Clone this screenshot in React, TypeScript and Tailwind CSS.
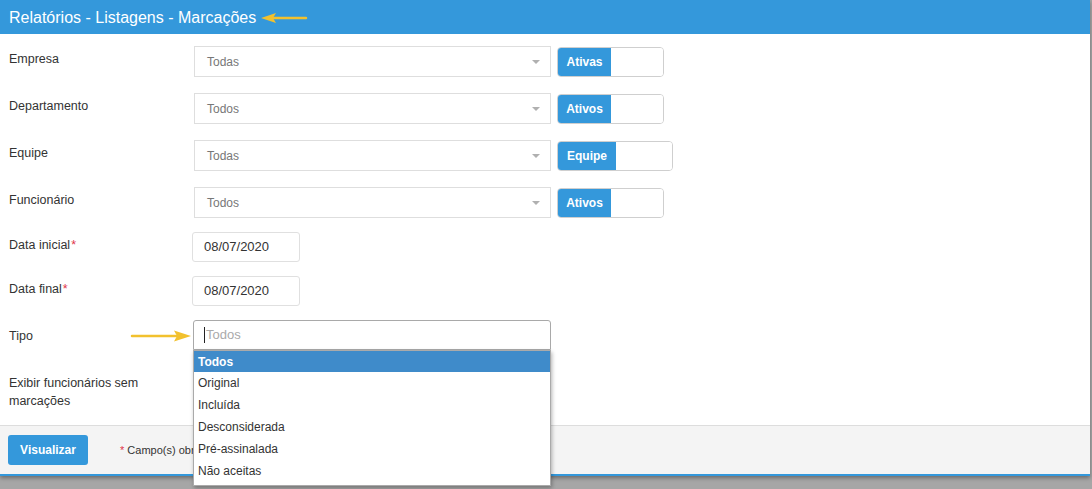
import React from 'react'

const selectRows = [
  { label: 'Empresa', value: 'Todas', toggle: 'Ativas', on: 'w-[53px]', off: 'w-[52px]' },
  { label: 'Departamento', value: 'Todos', toggle: 'Ativos', on: 'w-[53px]', off: 'w-[52px]' },
  { label: 'Equipe', value: 'Todas', toggle: 'Equipe', on: 'w-[58px]', off: 'w-[56px]' },
  { label: 'Funcionário', value: 'Todos', toggle: 'Ativos', on: 'w-[53px]', off: 'w-[52px]' },
]

const tipoOptions = ['Todos', 'Original', 'Incluída', 'Desconsiderada', 'Pré-assinalada', 'Não aceitas']

const ArrowLeft = () => (
  <svg width="48" height="12" viewBox="0 0 48 12" className="ml-[4px]">
    <path d="M14 6 H46" stroke="#f2c12e" strokeWidth="2.5" strokeLinecap="round" />
    <path d="M1 6 L16 1 L13 6 L16 11 Z" fill="#f2c12e" />
  </svg>
)

const ArrowRight = () => (
  <svg width="62" height="12" viewBox="0 0 62 12">
    <path d="M2 6 H46" stroke="#f2c12e" strokeWidth="2.5" strokeLinecap="round" />
    <path d="M61 6 L44 0.5 L47 6 L44 11.5 Z" fill="#f2c12e" />
  </svg>
)

const Label: React.FC<{ children: React.ReactNode; required?: boolean }> = ({ children, required }) => (
  <div className="w-[185px] shrink-0 pl-[9px] pt-[4px] text-[12.5px] leading-[18px] text-[#333]">
    {children}
    {required && <span className="ml-[1px] text-[#e0344a]">*</span>}
  </div>
)

export default function App() {
  return (
    <div className="h-[489px] w-[1092px] overflow-hidden bg-[#a6a6a6] font-['Liberation_Sans',Arial,sans-serif]">
      <div className="w-[1090px] border-b-2 border-[#3498db] bg-white shadow-[0_2px_4px_rgba(0,0,0,0.35)]">
        <div className="flex h-[34px] items-center bg-[#3498db] pl-[9px] pt-[1px] text-[16px] text-white">
          Relatórios - Listagens - Marcações
          <ArrowLeft />
        </div>

        <div className="flex flex-col pt-[12px] pb-[15px]">
          <div className="flex flex-col gap-[16px]">
            {selectRows.map((row) => (
              <div key={row.label} className="flex">
                <Label>{row.label}</Label>
                <div className="ml-[9px] flex h-[31px] w-[357px] items-center justify-between border border-[#dedede] bg-white pl-[12px] pr-[10px] text-[12px] text-[#777]">
                  <span>{row.value}</span>
                  <span className="h-0 w-0 border-x-[4px] border-t-[4px] border-x-transparent border-t-[#b0b0b0]" />
                </div>
                <div className="ml-[6px] mt-[1px] flex h-[30px] overflow-hidden rounded-[4px] border border-[#cfcfcf]">
                  <div className={`${row.on} flex items-center justify-center bg-[#3498db] text-[12px] font-bold text-white`}>
                    {row.toggle}
                  </div>
                  <div className={`${row.off} bg-white`} />
                </div>
              </div>
            ))}
          </div>

          <div className="mt-[14px] flex flex-col gap-[14px]">
            <div className="flex">
              <Label required>Data inicial</Label>
              <div className="ml-[7px] flex h-[30px] w-[108px] items-center rounded-[3px] border border-[#e0e0e0] pl-[11px] text-[13px] text-[#333]">
                08/07/2020
              </div>
            </div>
            <div className="flex">
              <Label required>Data final</Label>
              <div className="ml-[7px] flex h-[30px] w-[108px] items-center rounded-[3px] border border-[#e0e0e0] pl-[11px] text-[13px] text-[#333]">
                08/07/2020
              </div>
            </div>
            <div className="flex">
              <div className="relative w-[185px] shrink-0 pl-[9px] pt-[7px] text-[12.5px] leading-[18px] text-[#333]">
                Tipo
                <div className="absolute left-[130px] top-[10px]">
                  <ArrowRight />
                </div>
              </div>
              <div className="relative ml-[8px]">
                <div className="flex h-[30px] w-[358px] items-center rounded-t-[3px] border border-[#a9a9a9] pl-[10px] text-[13px] text-[#aaa]">
                  <span className="mr-[1px] h-[16px] w-[1px] bg-[#222]" />
                  Todos
                </div>
                <div className="absolute left-0 top-full z-10 w-[358px] border border-[#aaa] bg-white pb-[3px] shadow-[1px_2px_4px_rgba(0,0,0,0.3)]">
                  {tipoOptions.map((opt, i) => (
                    <div
                      key={opt}
                      className={
                        i === 0
                          ? 'flex h-[21px] items-center bg-[#3f8bca] pl-[4px] text-[12px] font-bold text-white'
                          : 'flex h-[22px] items-center pl-[4px] text-[12px] text-[#333]'
                      }>
                      {opt}
                    </div>
                  ))}
                </div>
              </div>
            </div>
          </div>

          <div className="mt-[24px] w-[185px] pl-[9px] text-[12.5px] leading-[18px] text-[#333]">
            Exibir funcionários sem marcações
          </div>
        </div>

        <div className="flex h-[49px] items-center border-t border-[#dddddd] bg-[#f4f4f4] pl-[8px]">
          <button className="h-[30px] w-[80px] rounded-[3px] bg-[#3498db] text-[12px] font-bold text-white">
            Visualizar
          </button>
          <span className="ml-[32px] text-[11px] text-[#333]">
            <span className="text-[#e0344a]">*</span> Campo(s) obrigatório(s)
          </span>
        </div>
      </div>
    </div>
  )
}
